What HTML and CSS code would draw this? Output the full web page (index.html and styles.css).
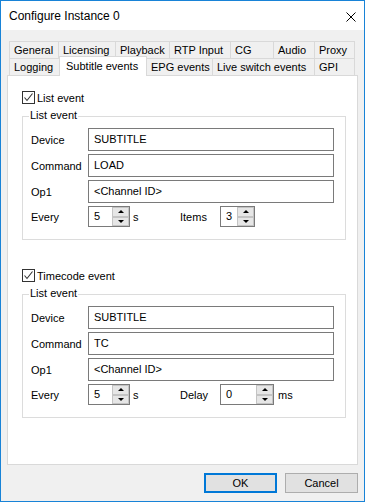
FILE: index.html
```html
<!DOCTYPE html>
<html>
<head>
<meta charset="utf-8">
<title>Configure Instance 0</title>
<link rel="stylesheet" href="styles.css">
</head>
<body>
<div class="window">
  <div class="titlebar">
    <span class="title">Configure Instance 0</span>
    <svg class="close" width="10" height="10" viewBox="0 0 10 10"><path d="M0.5 0.5L9.5 9.5M9.5 0.5L0.5 9.5" stroke="#000" stroke-width="1" fill="none"/></svg>
  </div>
  <div class="client">
    <div class="tabs">
      <div class="tabrow">
        <div class="tab w-general">General</div>
        <div class="tab w-licensing">Licensing</div>
        <div class="tab w-playback">Playback</div>
        <div class="tab w-rtp">RTP Input</div>
        <div class="tab w-cg">CG</div>
        <div class="tab w-audio">Audio</div>
        <div class="tab last w-proxy">Proxy</div>
      </div>
      <div class="tabrow">
        <div class="tab w-logging">Logging</div>
        <div class="tab sel w-subtitle">Subtitle events</div>
        <div class="tab w-epg">EPG events</div>
        <div class="tab w-live">Live switch events</div>
        <div class="tab last w-gpi">GPI</div>
      </div>
    </div>
    <div class="panel">
      <div class="check-row">
        <span class="checkbox"><svg width="11" height="11" viewBox="0 0 11 11"><path d="M1.5 5.5L4 8.5L9.5 1.5" stroke="#333" stroke-width="1.1" fill="none"/></svg></span>
        <span>List event</span>
      </div>
      <div class="group">
        <span class="legend">List event</span>
        <div class="row"><span class="lbl">Device</span><div class="field">SUBTITLE</div></div>
        <div class="row"><span class="lbl">Command</span><div class="field">LOAD</div></div>
        <div class="row"><span class="lbl">Op1</span><div class="field">&lt;Channel ID&gt;</div></div>
        <div class="row spin-row">
          <span class="lbl">Every</span>
          <div class="spin w-every"><span class="val">5</span><span class="btns"><span class="sbtn"><span class="up"></span></span><span class="sbtn"><span class="down"></span></span></span></div>
          <span class="unit">s</span>
          <span class="lbl2">Items</span>
          <div class="spin w-items"><span class="val">3</span><span class="btns"><span class="sbtn"><span class="up"></span></span><span class="sbtn"><span class="down"></span></span></span></div>
        </div>
      </div>
      <div class="check-row second">
        <span class="checkbox"><svg width="11" height="11" viewBox="0 0 11 11"><path d="M1.5 5.5L4 8.5L9.5 1.5" stroke="#333" stroke-width="1.1" fill="none"/></svg></span>
        <span>Timecode event</span>
      </div>
      <div class="group">
        <span class="legend">List event</span>
        <div class="row"><span class="lbl">Device</span><div class="field">SUBTITLE</div></div>
        <div class="row"><span class="lbl">Command</span><div class="field">TC</div></div>
        <div class="row"><span class="lbl">Op1</span><div class="field">&lt;Channel ID&gt;</div></div>
        <div class="row spin-row">
          <span class="lbl">Every</span>
          <div class="spin w-every"><span class="val">5</span><span class="btns"><span class="sbtn"><span class="up"></span></span><span class="sbtn"><span class="down"></span></span></span></div>
          <span class="unit">s</span>
          <span class="lbl2">Delay</span>
          <div class="spin w-delay"><span class="val">0</span><span class="btns"><span class="sbtn"><span class="up"></span></span><span class="sbtn"><span class="down"></span></span></span></div>
          <span class="unit2">ms</span>
        </div>
      </div>
    </div>
    <div class="buttons">
      <div class="button default">OK</div>
      <div class="button">Cancel</div>
    </div>
  </div>
</div>
</body>
</html>
```
FILE: styles.css
```css
* { box-sizing: border-box; }
html, body { margin: 0; padding: 0; background: #fff; }
body {
  font-family: "Liberation Sans", Arial, sans-serif;
  font-size: 11px;
  color: #000;
}
.window {
  width: 365px;
  height: 502px;
  border: 1px solid #1883d7;
  display: flex;
  flex-direction: column;
  background: #f0f0f0;
}
.titlebar {
  height: 29px;
  flex: none;
  background: #fff;
  display: flex;
  align-items: center;
  justify-content: space-between;
  padding: 0 8px;
}
.title { font-size: 12px; }
.close { margin-top: 2px; }
.client {
  flex: 1;
  display: flex;
  flex-direction: column;
  padding: 11px 6px 8px 6px;
}
.tabs { margin-left: 2px; }
.tabrow { display: flex; height: 17px; }
.tab {
  height: 17px;
  flex: none;
  border-top: 1px solid #d9d9d9;
  border-left: 1px solid #d9d9d9;
  padding-left: 4px;
  line-height: 16px;
  white-space: nowrap;
  background: #f0f0f0;
}
.tab.last { border-right: 1px solid #d9d9d9; }
.tab.sel {
  background: #fff;
  border-right: 1px solid #d9d9d9;
  height: 20px;
  margin-top: -2px;
  margin-bottom: -1px;
  margin-right: -1px;
  position: relative;
  z-index: 1;
  padding-left: 6px;
  padding-top: 1px;
}
.w-general { width: 49px; }
.w-licensing { width: 57px; }
.w-playback { width: 54px; }
.w-rtp { width: 61px; }
.w-cg { width: 43px; }
.w-audio { width: 41px; }
.w-proxy { width: 41px; }
.w-logging { width: 50px; }
.w-subtitle { width: 88px; }
.w-epg { width: 66px; }
.w-live { width: 102px; }
.w-gpi { width: 41px; }

.panel {
  height: 390px;
  flex: none;
  background: #fff;
  border: 1px solid #d9d9d9;
  padding: 15px 11px 0 14px;
}
.check-row {
  display: flex;
  align-items: center;
  height: 13px;
  gap: 2px;
}
.check-row.second { margin-top: 29px; }
.checkbox {
  width: 13px;
  height: 13px;
  border: 1px solid #333;
  background: #fff;
  display: flex;
}
.group {
  margin-top: 12px;
  border: 1px solid #dcdcdc;
  padding: 11px 11px 12px 8px;
  position: relative;
}
.legend {
  position: absolute;
  top: -8px;
  left: 6px;
  padding: 0 1px;
  line-height: 13px;
  background: #fff;
}
.row {
  display: flex;
  align-items: center;
  height: 23px;
  margin-bottom: 3px;
}
.row.spin-row { height: 21px; margin-bottom: 0; }
.lbl { width: 57px; flex: none; }
.field {
  flex: 1;
  height: 23px;
  border: 1px solid #7a7a7a;
  padding-left: 5px;
  line-height: 20px;
}
.spin {
  height: 21px;
  flex: none;
  border: 1px solid #7a7a7a;
  display: flex;
}
.w-every { width: 42px; }
.w-items { width: 35px; }
.w-delay { width: 54px; }
.spin .val { flex: 1; padding-left: 5px; line-height: 18px; }
.btns { width: 17px; display: flex; flex-direction: column; }
.sbtn {
  flex: 1;
  background: #e6e6e6;
  border: 1px solid #c4c4c4;
  display: flex;
  align-items: center;
  justify-content: center;
}
.up, .down { width: 0; height: 0; border-left: 3px solid transparent; border-right: 3px solid transparent; }
.up { border-bottom: 3px solid #000; }
.down { border-top: 3px solid #000; }
.unit { margin-left: 3px; width: 47px; flex: none; }
.lbl2 { width: 40px; flex: none; }
.unit2 { margin-left: 4px; }

.buttons {
  display: flex;
  justify-content: flex-end;
  gap: 8px;
  margin-top: 8px;
}
.button {
  width: 73px;
  height: 20px;
  background: #e1e1e1;
  border: 1px solid #adadad;
  text-align: center;
  line-height: 18px;
}
.button.default { border: 2px solid #0078d7; line-height: 16px; }
```
